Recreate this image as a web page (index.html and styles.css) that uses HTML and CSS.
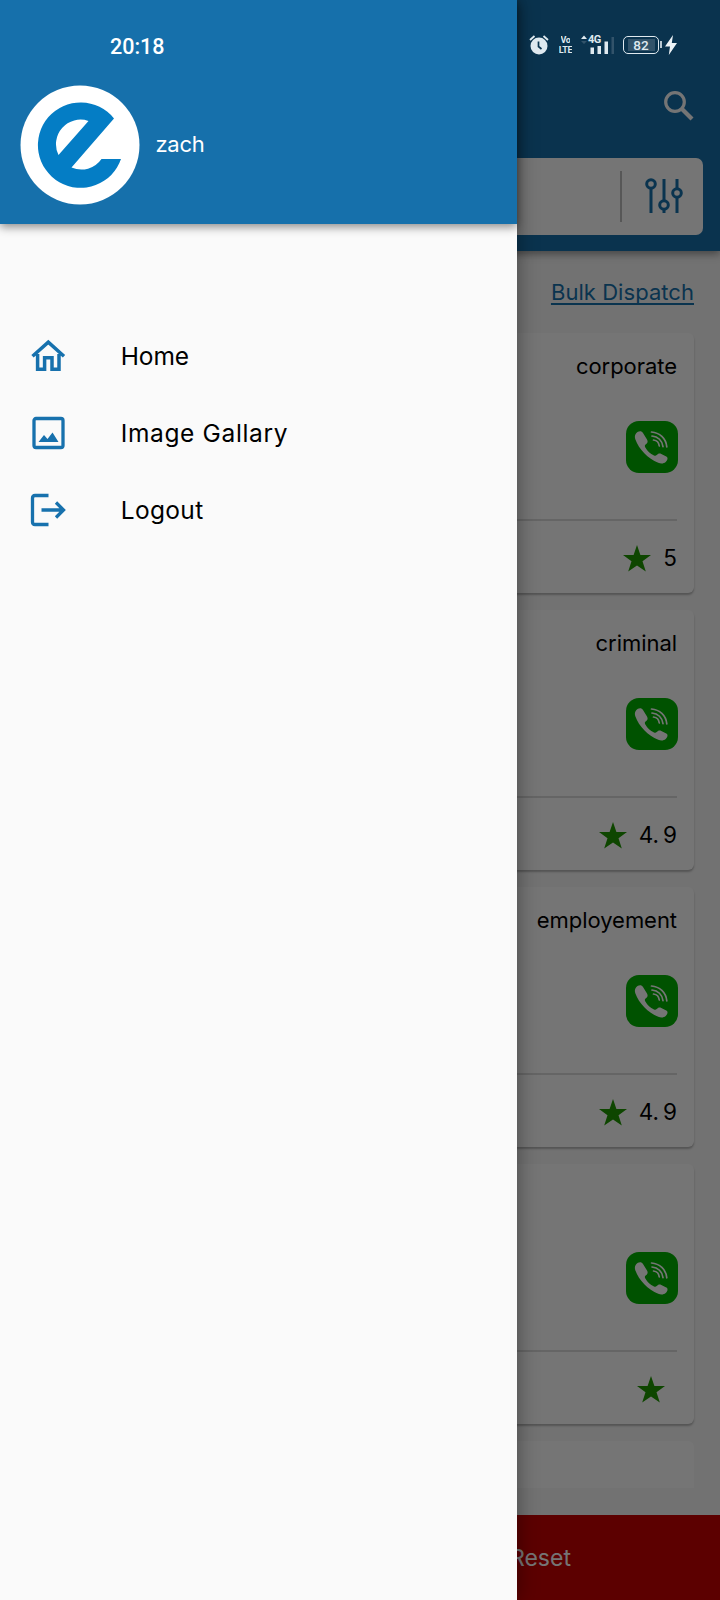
FILE: index.html
```html
<!DOCTYPE html>
<html lang="en">
<head>
<meta charset="utf-8">
<title>Dispatch</title>
<link rel="stylesheet" href="styles.css">
</head>
<body>
<svg class="defs" aria-hidden="true">
  <symbol id="star" viewBox="0 0 28 27"><path d="M14 0l3.400 9.900H28l-8.500 6.300 3.300 10.400L14 20.500l-8.800 6.100 3.300-10.400L0 9.900h10.600z"/></symbol>
  <symbol id="phone" viewBox="0 0 52 52">
    <rect width="52" height="52" rx="13" fill="#00b200"/>
    <path fill="#fff" d="M10 12.500C12 10 15.500 9.500 17 12l4 6.500c1.200 2 .6 3.700-1 4.700-1.200.8-1.500 1.600-.8 3 2.300 4 5 6.500 8.800 8.400 1.200.5 2 .3 2.700-.5 1.300-1.600 2.800-2 4.600-1.100l5 2.400c2 1 1.400 3.700-.6 5.600-2 1.700-4.700 2-7.500.7C22 37.500 13 28.500 9.300 18.200c-.8-2.300-.5-4.200.7-5.700z"/>
    <path fill="none" stroke="#fff" stroke-width="1.700" stroke-linecap="round" d="M27.500 19c3.200.4 5.400 2.600 5.800 6M26 15c6 .4 10.300 4.700 11 10.600M25.500 11c8 .5 14.500 6.500 15.300 14.800"/>
  </symbol>
</svg>
<div class="screen">
  <main class="app">
    <header class="appbar">
      <svg class="search-icon" viewBox="0 0 30 30"><circle cx="11" cy="11" r="9.300" fill="none" stroke="#fff" stroke-width="3.200"/><path d="M18 18l10 10" stroke="#fff" stroke-width="4.200"/></svg>
      <div class="search-box">
        <span class="rule"></span>
        <svg class="tune" viewBox="0 0 38 36"><g fill="none" stroke="#1771ad" stroke-width="3"><path d="M6 10.500V35M19 1v21M19 31v4M32 1v9M32 20v15"/><circle cx="6" cy="6" r="4.300"/><circle cx="19" cy="27" r="4.300"/><circle cx="32" cy="15" r="4.300"/></g></svg>
      </div>
    </header>
    <div class="bulk"><a class="bulk-link">Bulk Dispatch</a></div>
    <section class="list">
      <article class="card">
        <div class="kind">corporate</div><svg class="call"><use href="#phone"/></svg>
        <div class="rating"><svg class="star"><use href="#star"/></svg><span>5</span></div>
      </article>
      <article class="card">
        <div class="kind">criminal</div><svg class="call"><use href="#phone"/></svg>
        <div class="rating"><svg class="star"><use href="#star"/></svg><span>4<span class="dot">.</span>9</span></div>
      </article>
      <article class="card">
        <div class="kind">employement</div><svg class="call"><use href="#phone"/></svg>
        <div class="rating"><svg class="star"><use href="#star"/></svg><span>4<span class="dot">.</span>9</span></div>
      </article>
      <article class="card">
        <div class="kind"></div><svg class="call"><use href="#phone"/></svg>
        <div class="rating"><svg class="star lone"><use href="#star"/></svg></div>
      </article>
      <article class="card clipped"></article>
    </section>
    <footer class="reset"><span>Reset</span></footer>
  </main>
  <div class="scrim"></div>
  <aside class="drawer">
    <header class="profile">
      <svg class="avatar" viewBox="0 0 120 120"><circle cx="60" cy="60" r="59.500" fill="#fff"/><path fill="#047dc5" d="M94 33.500A42.700 42.700 0 1 0 101 74H81.500A24.500 24.500 0 0 1 51.500 82.500zM38.500 70A24.500 24.500 0 0 1 68.500 36z"/></svg>
      <span class="name">zach</span>
    </header>
    <nav class="menu">
      <a class="item"><svg class="icon" viewBox="0 0 36 36"><path d="M2.500 17.300L18.300 3.200l15.700 14.100M7.600 15v15.200h7V18.800H22v11.400h7V15" fill="none" stroke="#1771ad" stroke-width="3.500"/></svg><span class="home">Home</span></a>
      <a class="item"><svg class="icon" viewBox="0 0 36 36"><rect x="4" y="2.500" width="29" height="29" rx="2" fill="none" stroke="#1771ad" stroke-width="3.300"/><path d="M8.500 26l5.500-7 3.500 4 5-6.500 6 9.500z" fill="#1771ad"/></svg><span class="gallery">Image Gallary</span></a>
      <a class="item"><svg class="icon" viewBox="0 0 36 36"><path d="M18.500 2.500H5Q2.500 2.500 2.500 5v24q0 2.500 2.500 2.500h13.500M11.500 17h22M26 9.500L33.500 17 26 24.500" fill="none" stroke="#1771ad" stroke-width="3.300"/></svg><span class="logout">Logout</span></a>
    </nav>
  </aside>
  <div class="status">
    <span class="time">20:18</span>
    <div class="indicators">
      <svg class="alarm" viewBox="0 0 20 20"><circle cx="10" cy="11" r="8.500" fill="#dfe9ef"/><path d="M1 5l4.500-4M19 5l-4.500-4" stroke="#dfe9ef" stroke-width="1.800"/><path d="M9.500 6.500v5l3 2.500" fill="none" stroke="#0b344f" stroke-width="1.700"/></svg>
      <div class="volte"><span>Vo</span><span>LTE</span></div>
      <div class="cell"><svg class="bars" viewBox="0 0 34 20"><g fill="#dfe9ef"><path d="M0 4l3-3.500L6 4z"/><path d="M9.500 12.500H13V19H9.500zM16.500 11H20v8h-3.500zM23.500 6.500H27V19h-3.500z"/></g><path d="M30.500 2H33v17h-2.500zM0 6h6L3 9z" fill="#32536a"/></svg><span class="gen">4G</span></div>
      <div class="battery">82</div>
      <svg class="bolt" viewBox="0 0 12 20"><path d="M8 0L0 11.500h5L3.800 20 12 8H6.800z" fill="#eef4f7"/></svg>
    </div>
  </div>
</div>
</body>
</html>
```
FILE: styles.css
```css
* { box-sizing: border-box; }
body { margin: 0; font-family: Inter, "Liberation Sans", sans-serif; }
.defs { position: absolute; width: 0; height: 0; }
.screen { position: relative; width: 720px; height: 1600px; overflow: hidden; }
.app { display: flex; flex-direction: column; height: 1600px; background: #f8f8f8; }
.appbar { flex: none; height: 251px; padding: 90px 17px 0; background: #1670ab; box-shadow: 0 3px 8px rgba(0,0,0,.4); display: flex; flex-direction: column; align-items: flex-end; }
.search-icon { width: 30px; height: 30px; margin: 1px 9px 37px 0; flex: none; }
.search-box { width: 100%; height: 77px; flex: none; background: #fff; border-radius: 7px; display: flex; align-items: center; justify-content: flex-end; padding: 0 20px 1px 0; gap: 23px; }
.rule { width: 2px; height: 51px; background: #bdbdbd; }
.tune { width: 38px; height: 36px; }
.bulk { height: 82px; flex: none; display: flex; justify-content: flex-end; padding: 26px 26px 0 0; }
.bulk-link { font-size: 22px; line-height: 30px; color: #1771ad; text-decoration: underline; text-decoration-thickness: 2px; text-underline-offset: 3px; text-decoration-skip-ink: none; letter-spacing: .05px; }
.list { height: 1155px; flex: none; padding: 0 26px; display: flex; flex-direction: column; gap: 17px; }
.card { height: 260px; flex: none; background: #fff; border-radius: 6px; box-shadow: 0 2px 2px rgba(0,0,0,.26); padding: 18px 17px 0; display: flex; flex-direction: column; align-items: flex-end; }
.clipped { height: 47px; border-radius: 6px 6px 0 0; box-shadow: none; }
.kind { font-size: 22px; line-height: 30px; height: 30px; letter-spacing: -.05px; }
.call { width: 52px; height: 52px; margin: 40px -1px 0 0; flex: none; }
.rating { width: 100%; margin-top: 46px; border-top: 2px solid #dcdcdc; height: 72px; display: flex; align-items: center; justify-content: flex-end; gap: 12px; font-size: 22.500px; padding-top: 3px; }
.star { width: 28px; height: 27px; margin-top: 1px; fill: #1f9800; }
.lone { margin-right: 12px; }
.dot { margin: 0 4px 0 0; }
.reset { margin-top: auto; height: 85px; background: #c80000; color: #fff; display: flex; align-items: center; padding-left: 510px; font-size: 23px; }
.scrim { position: absolute; inset: 0; background: rgba(0,0,0,.54); }
.drawer { position: absolute; top: 0; left: 0; width: 517px; height: 1600px; background: #fafafa; box-shadow: 0 0 20px rgba(0,0,0,.4); }
.profile { height: 224px; background: #1670ab; box-shadow: 0 3px 9px rgba(0,0,0,.45); display: flex; align-items: center; padding: 66px 20px 0; gap: 15.500px; color: #fff; }
.avatar { width: 120px; height: 120px; }
.name { font-size: 22px; line-height: 28px; margin-bottom: 3px; letter-spacing: -.3px; }
.menu { padding-top: 94px; }
.item { display: flex; align-items: center; height: 76.800px; padding-left: 30px; gap: 54.700px; font-size: 24.500px; color: #000; }
.icon { width: 36px; height: 36px; margin-top: 2px; }
.home { letter-spacing: -.1px; }
.gallery { letter-spacing: .65px; }
.logout { letter-spacing: .35px; }
.status { position: absolute; top: 0; left: 0; width: 720px; height: 90px; display: flex; align-items: center; justify-content: space-between; padding: 1px 43px 0 110px; color: #fff; }
.time { font: 500 21.500px Roboto, sans-serif; padding-top: 1px; }
.indicators { display: flex; align-items: center; height: 24px; margin-top: -1px; color: #dfe9ef; }
.alarm { width: 20px; height: 20px; margin-right: 10px; }
.volte { width: 13px; display: flex; flex-direction: column; align-items: center; gap: 1px; font: 700 9px/9px Roboto, sans-serif; margin-right: 9px; letter-spacing: -.4px; }
.volte span { height: 9px; overflow: hidden; }
.cell { position: relative; width: 34px; height: 20px; margin-right: 8px; }
.bars { width: 34px; height: 20px; display: block; }
.gen { position: absolute; left: 7px; top: -1px; font: 700 11px/11px Roboto, sans-serif; letter-spacing: -.6px; }
.battery { position: relative; width: 36px; height: 18px; border: 1.500px solid #dfe9ef; border-radius: 5px; font: 500 13.500px/16px Roboto, sans-serif; text-align: center; background: linear-gradient(#32536a, #32536a) center/27px 12px no-repeat; margin-right: 6px; }
.battery::after { content: ""; position: absolute; right: -4px; top: 4px; width: 2px; height: 7px; background: #b8c8d2; }
.bolt { width: 12px; height: 20px; }
```
